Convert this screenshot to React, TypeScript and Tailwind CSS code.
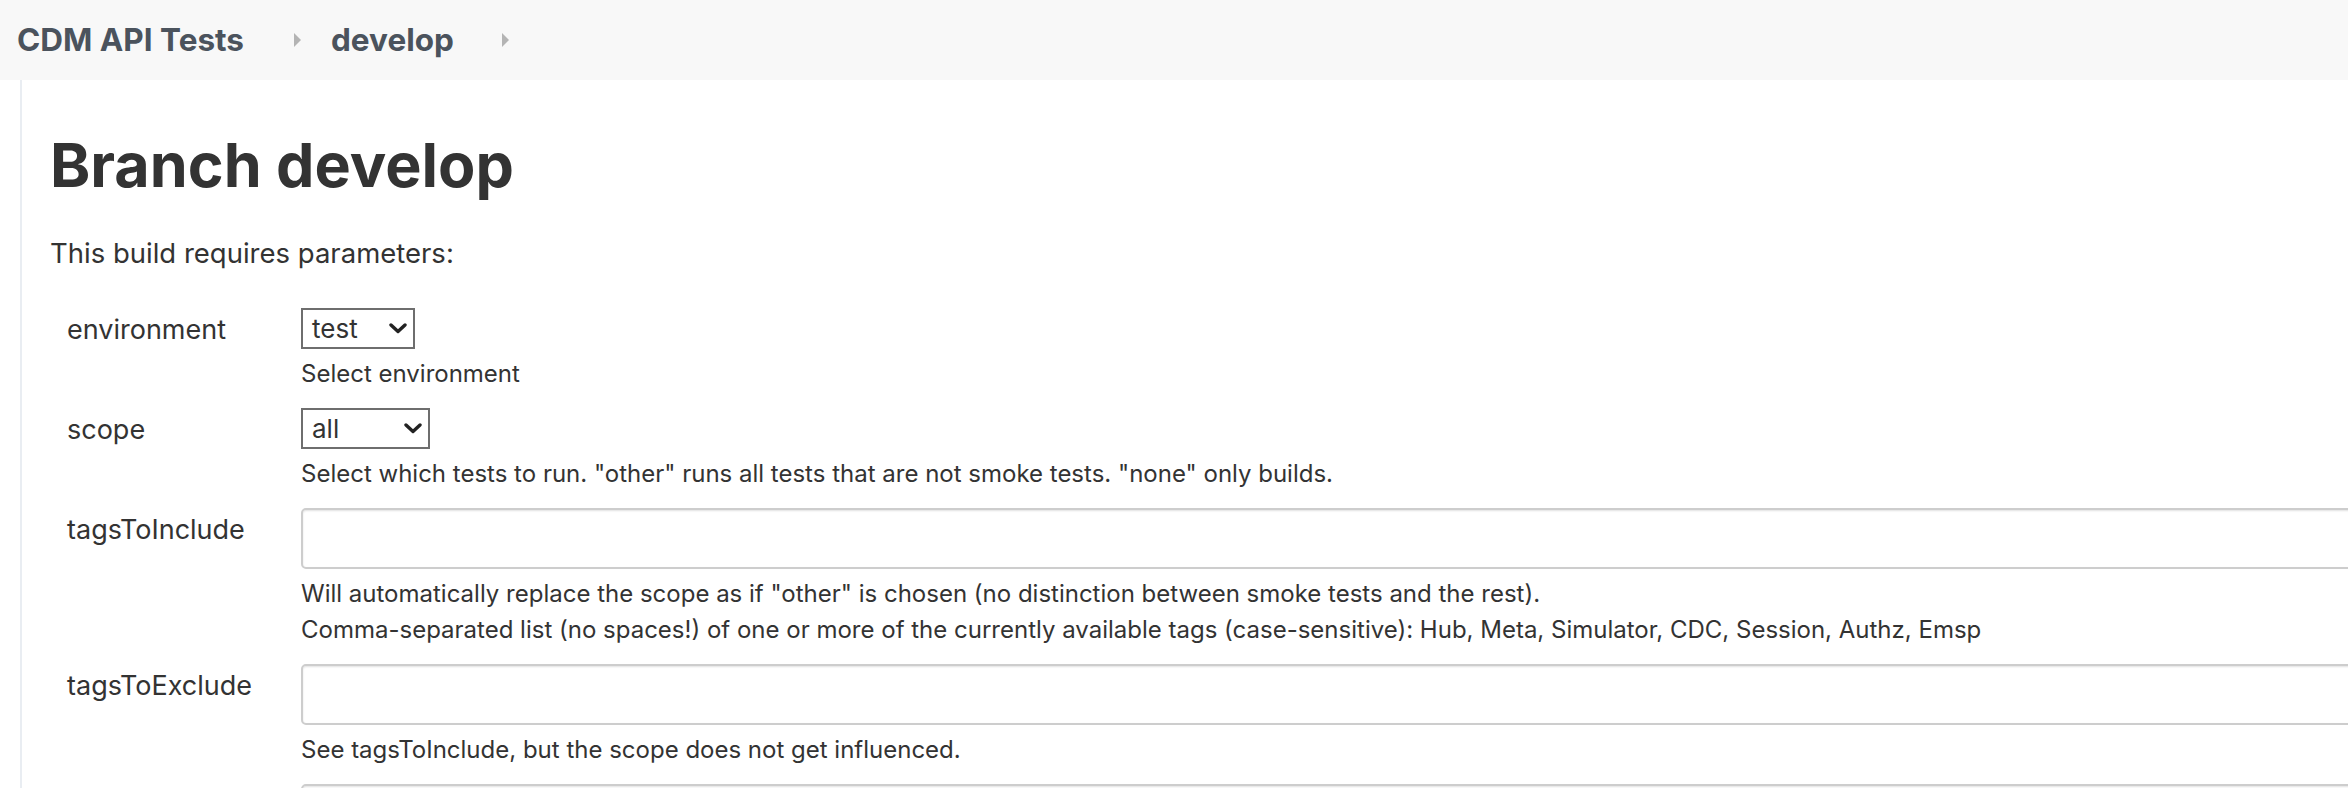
import React from 'react';

interface Param {
  name: string;
  kind: 'select' | 'text';
  value?: string;
  width?: string;
  help: string[];
}

const params: Param[] = [
  { name: 'environment', kind: 'select', value: 'test', width: 'w-[114px]', help: ['Select environment'] },
  {
    name: 'scope',
    kind: 'select',
    value: 'all',
    width: 'w-[129px]',
    help: ['Select which tests to run. "other" runs all tests that are not smoke tests. "none" only builds.'],
  },
  {
    name: 'tagsToInclude',
    kind: 'text',
    help: [
      'Will automatically replace the scope as if "other" is chosen (no distinction between smoke tests and the rest).',
      'Comma-separated list (no spaces!) of one or more of the currently available tags (case-sensitive): Hub, Meta, Simulator, CDC, Session, Authz, Emsp',
    ],
  },
  { name: 'tagsToExclude', kind: 'text', help: ['See tagsToInclude, but the scope does not get influenced.'] },
];

const Crumb = () => (
  <svg width="7" height="14" viewBox="0 0 7 14" className="shrink-0">
    <path d="M0 0 L7 7 L0 14 Z" fill="#b4b4b4" />
  </svg>
);

const Chevron = () => (
  <svg width="18" height="11" viewBox="0 0 18 11" className="shrink-0">
    <path d="M2 2 L9 8.5 L16 2" fill="none" stroke="#222" strokeWidth="3.4" strokeLinecap="round" strokeLinejoin="round" />
  </svg>
);

const TextInput = () => (
  <input
    type="text"
    className="w-[2100px] h-[61px] rounded-[5px] border-2 border-[#cdcdcd] bg-white shadow-[inset_0_1px_2px_rgba(0,0,0,0.12)] outline-none"
  />
);

const Field: React.FC<{ p: Param }> = ({ p }) => (
  <div className="flex pb-[16px]">
    <div className="w-[234px] shrink-0 pt-[1px] text-[27px] leading-[41px]">{p.name}</div>
    <div className="flex flex-col">
      {p.kind === 'select' ? (
        <div
          className={`${p.width} h-[41px] flex items-center justify-between border-2 border-[#6e6e6e] bg-white pl-[9px] pr-[6px] text-[26px]`}
        >
          <span>{p.value}</span>
          <Chevron />
        </div>
      ) : (
        <TextInput />
      )}
      <div className="mt-[7px] text-[24px] leading-[36px] text-[#333] whitespace-nowrap">
        {p.help.map((line) => (
          <div key={line}>{line}</div>
        ))}
      </div>
    </div>
  </div>
);

export default function App() {
  return (
    <div className="w-full h-[788px] overflow-hidden bg-white text-[#333] font-['Inter',sans-serif]">
      {/* breadcrumb bar */}
      <header className="h-[80px] flex items-center pl-[17px] bg-[#f8f8f8] text-[#4b535d] font-bold text-[31.5px]">
        <span>CDM API Tests</span>
        <span className="ml-[50px] mr-[30px] flex"><Crumb /></span>
        <span>develop</span>
        <span className="ml-[48px] flex"><Crumb /></span>
      </header>

      <div className="flex">
        <div className="w-[20px] shrink-0" />
        <main className="border-l-2 border-[#e9edf2] pl-[28px] pt-[48px] min-h-[708px] flex-1">
          <h1 className="text-[61px] leading-[74px] font-bold">Branch develop</h1>
          <p className="mt-[33px] text-[27.5px] leading-[36px]">This build requires parameters:</p>

          <div className="mt-[37px] pl-[17px]">
            {params.map((p) => (
              <Field key={p.name} p={p} />
            ))}
            <div className="flex">
              <div className="w-[234px] shrink-0" />
              <TextInput />
            </div>
          </div>
        </main>
      </div>
    </div>
  );
}
